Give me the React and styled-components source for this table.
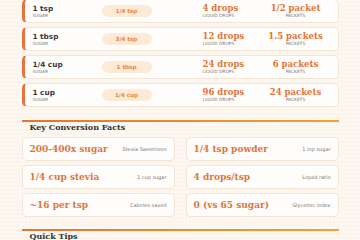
import React from 'react';
import styled, { createGlobalStyle } from 'styled-components';

const GlobalStyle = createGlobalStyle`
  html, body {
    margin: 0;
    padding: 0;
    overflow: hidden;
  }
  body {
    font-family: "DejaVu Sans", sans-serif;
    background-color: #fcf7f1;
    background-image: radial-gradient(#f6ebdf 0.6px, transparent 0.8px);
    background-size: 4px 4px;
    color: #333;
  }
`;

const Page = styled.div`
  width: 317px;
  margin: -1px auto 0;
`;

const RowList = styled.div`
  display: flex;
  flex-direction: column;
  gap: 4px;
`;

const Row = styled.div`
  display: grid;
  grid-template-columns: 69px 101px 58px 70px;
  align-items: center;
  height: 24px;
  box-sizing: border-box;
  padding: 0 8px;
  background: #fffdfb;
  border: 1px solid #f4e4d4;
  border-left: 3px solid #e8743b;
  border-radius: 5px;
`;

const Cell = styled.div`
  display: flex;
  flex-direction: column;
  align-items: ${(p) => (p.$center ? 'center' : 'flex-start')};
`;

const Amount = styled.div`
  font-weight: bold;
  font-size: 7.3px;
  line-height: 9px;
  color: #3a3a3a;
`;

const Caption = styled.div`
  font-size: 4.4px;
  line-height: 6px;
  text-transform: uppercase;
  color: #777;
  white-space: nowrap;
`;

const Pill = styled.div`
  width: 50px;
  height: 12px;
  border-radius: 6px;
  background: #fdebd6;
  color: #ea8445;
  font-size: 5.6px;
  font-weight: bold;
  display: flex;
  align-items: center;
  justify-content: center;
`;

const Value = styled.div`
  font-family: "DejaVu Serif", serif;
  font-weight: bold;
  font-size: 8.5px;
  line-height: 10px;
  color: #df763a;
  white-space: nowrap;
`;

const Section = styled.section`
  margin-top: 13px;
  border-top: 2px solid transparent;
  border-image: linear-gradient(90deg, #df7634, #f5a229) 1;
`;

const SectionTitle = styled.h2`
  margin: 0;
  padding: 0 8px;
  font-family: "DejaVu Serif", serif;
  font-weight: bold;
  font-size: 8px;
  line-height: 10px;
  color: #333;
`;

const FactGrid = styled.div`
  display: grid;
  grid-template-columns: 1fr 1fr;
  column-gap: 11px;
  row-gap: 4px;
  margin-top: 5px;
`;

const FactCard = styled.div`
  display: flex;
  align-items: center;
  justify-content: space-between;
  height: 24px;
  box-sizing: border-box;
  padding: 0 7px;
  background: #fffdfb;
  border: 1px solid #f4e4d4;
  border-radius: 5px;
`;

const FactValue = styled.div`
  font-family: "DejaVu Serif", serif;
  font-weight: bold;
  font-size: 9px;
  color: #df763a;
  white-space: nowrap;
`;

const FactLabel = styled.div`
  font-size: 5px;
  color: #777;
  white-space: nowrap;
`;

const TipsSection = styled(Section)`
  margin-top: 12px;
`;

const conversions = [
  { sugar: '1 tsp', powder: '1/4 tsp', drops: '4 drops', packets: '1/2 packet' },
  { sugar: '1 tbsp', powder: '3/4 tsp', drops: '12 drops', packets: '1.5 packets' },
  { sugar: '1/4 cup', powder: '1 tbsp', drops: '24 drops', packets: '6 packets' },
  { sugar: '1 cup', powder: '1/4 cup', drops: '96 drops', packets: '24 packets' },
];

const facts = [
  { value: '200-400x sugar', label: 'Stevia Sweetness' },
  { value: '1/4 tsp powder', label: '1 tsp sugar' },
  { value: '1/4 cup stevia', label: '1 cup sugar' },
  { value: '4 drops/tsp', label: 'Liquid ratio' },
  { value: '~16 per tsp', label: 'Calories saved' },
  { value: '0 (vs 65 sugar)', label: 'Glycemic index' },
];

const App = () => {
  return (
    <>
      <GlobalStyle />
      <Page>
        <RowList>
          {conversions.map((c) => (
            <Row key={c.sugar}>
              <Cell>
                <Amount>{c.sugar}</Amount>
                <Caption>Sugar</Caption>
              </Cell>
              <Cell>
                <Pill>{c.powder}</Pill>
              </Cell>
              <Cell>
                <Value>{c.drops}</Value>
                <Caption>Liquid drops</Caption>
              </Cell>
              <Cell $center>
                <Value>{c.packets}</Value>
                <Caption>Packets</Caption>
              </Cell>
            </Row>
          ))}
        </RowList>

        <Section>
          <SectionTitle>Key Conversion Facts</SectionTitle>
          <FactGrid>
            {facts.map((f) => (
              <FactCard key={f.label}>
                <FactValue>{f.value}</FactValue>
                <FactLabel>{f.label}</FactLabel>
              </FactCard>
            ))}
          </FactGrid>
        </Section>

        <TipsSection>
          <SectionTitle>Quick Tips</SectionTitle>
        </TipsSection>
      </Page>
    </>
  );
};

export default App;
